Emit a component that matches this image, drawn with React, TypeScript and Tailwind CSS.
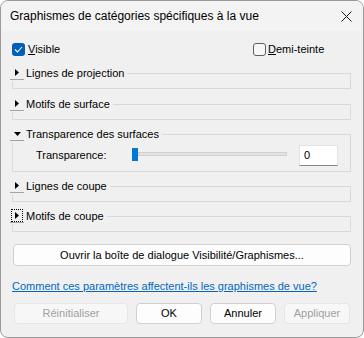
import React from 'react';

function Arrow({ dir }: { dir: 'right' | 'down' }) {
  return dir === 'right' ? (
    <svg width="4" height="7" viewBox="0 0 4 7"><path d="M0 0 L4 3.5 L0 7 Z" fill="#000" /></svg>
  ) : (
    <svg width="7" height="4" viewBox="0 0 7 4"><path d="M0 0 L7 0 L3.5 4 Z" fill="#000" /></svg>
  );
}

function GroupHeader({ label, open, focused }: { label: string; open?: boolean; focused?: boolean }) {
  return (
    <div className="relative z-10 flex items-center h-[16px] w-fit -ml-[2px] pr-[3px] bg-[#f0f0f0]">
      <div className="w-[14px] h-[14px] flex items-center justify-center border-b border-[#a3a3a3]">
        <div className={focused ? 'flex items-center justify-center w-[10px] h-[11px] outline-1 outline-dotted outline-black' : 'flex items-center justify-center'}>
          <Arrow dir={open ? 'down' : 'right'} />
        </div>
      </div>
      <span className="ml-[2px] leading-[16px]">{label}</span>
    </div>
  );
}

function Group({ label, focused, top = 'mt-[6px]' }: { label: string; focused?: boolean; top?: string }) {
  return (
    <div className={'flex flex-col ' + top}>
      <GroupHeader label={label} focused={focused} />
      <div className="-mt-[8px] h-[16px] border border-[#d9d9d9]" />
    </div>
  );
}

export default function App() {
  return (
    <div className="w-[364px] h-[338px] bg-[#f0f0f0] border border-[#9a9a9a] rounded-[8px] overflow-hidden flex flex-col text-[11px] text-black font-['Segoe_UI','Liberation_Sans',sans-serif]">
      <div className="h-[30px] shrink-0 flex items-center justify-between pl-[9px] pr-[11px] bg-[#f3f3f3]">
        <span className="text-[12px]">Graphismes de catégories spécifiques à la vue</span>
        <svg width="11" height="11" viewBox="0 0 11 11">
          <path d="M0.5 0.5 L10.5 10.5 M10.5 0.5 L0.5 10.5" stroke="#1a1a1a" strokeWidth="1" />
        </svg>
      </div>

      <div className="flex flex-col pl-[11px] pr-[12px]">
        <div className="mt-[11px] h-[14px] flex items-center">
          <label className="w-[241px] flex items-center gap-[3px]">
            <span className="w-[13px] h-[13px] rounded-[3px] bg-[#005fb8] flex items-center justify-center">
              <svg width="9" height="7" viewBox="0 0 9 7">
                <path d="M1 3.5 L3.5 6 L8 1" stroke="#fff" strokeWidth="1.1" fill="none" />
              </svg>
            </span>
            <span><span className="underline">V</span>isible</span>
          </label>
          <label className="flex items-center gap-[2px]">
            <span className="w-[13px] h-[13px] rounded-[3px] border border-[#5f5f5f] bg-[#f7f7f7]" />
            <span><span className="underline">D</span>emi-teinte</span>
          </label>
        </div>

        <div className="mt-[3px] flex flex-col">
          <Group label="Lignes de projection" />
          <Group label="Motifs de surface" top="mt-[7px]" />

          <div className="flex flex-col mt-[6px]">
            <GroupHeader label="Transparence des surfaces" open />
            <div className="-mt-[8px] h-[38px] border border-[#d9d9d9] flex items-center pl-[23px] pr-[12px] pt-[4px]">
              <span className="w-[96px]">Transparence:</span>
              <div className="w-[155px] flex items-center -mt-[2px]">
                <div className="w-[6px] h-[13px] bg-[#0078d7]" />
                <div className="flex-1 h-[4px] bg-[#e3e3e3] border border-[#d0d0d0]" />
              </div>
              <div className="ml-[12px] w-[39px] h-[21px] bg-white border border-[#e2e2e2] border-b-[#868686] flex items-center pl-[4px]">
                0
              </div>
            </div>
          </div>

          <Group label="Lignes de coupe" />
          <Group label="Motifs de coupe" focused />
        </div>

        <button className="mt-[12px] h-[22px] ml-[1px] rounded-[4px] border border-[#d0d0d0] bg-[#fdfdfd] text-center">
          Ouvrir la boîte de dialogue Visibilité/Graphismes...
        </button>

        <div className="mt-[12px] h-[16px] leading-[16px]">
          <a className="text-[#0067c0] underline">Comment ces paramètres affectent-ils les graphismes de vue?</a>
        </div>

        <div className="mt-[9px] flex gap-[8px] ml-[2px]">
          <button className="w-[114px] h-[21px] rounded-[4px] border border-[#e6e6e6] bg-[#f7f7f7] text-[#9f9f9f]">Réinitialiser</button>
          <button className="w-[66px] h-[21px] rounded-[4px] border border-[#d0d0d0] bg-[#fdfdfd]">OK</button>
          <button className="w-[66px] h-[21px] rounded-[4px] border border-[#d0d0d0] bg-[#fdfdfd]">Annuler</button>
          <button className="w-[66px] h-[21px] rounded-[4px] border border-[#e6e6e6] bg-[#f7f7f7] text-[#9f9f9f]">Appliquer</button>
        </div>
      </div>
    </div>
  );
}
